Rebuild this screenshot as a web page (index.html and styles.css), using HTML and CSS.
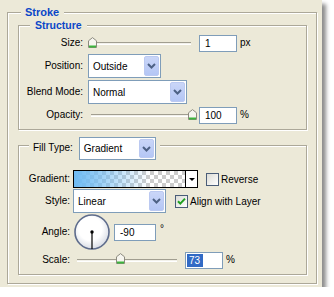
FILE: index.html
```html
<!DOCTYPE html>
<html>
<head>
<meta charset="utf-8">
<link rel="stylesheet" href="styles.css">
</head>
<body>
<div class="panel">
  <fieldset class="group outer">
    <legend class="title">Stroke</legend>
    <fieldset class="group structure">
      <legend class="title sub">Structure</legend>
      <div class="row r-size">
        <span class="label">Size:</span>
        <div class="slider s-size">
          <div class="track"></div>
          <span class="thumb" style="left:0px"><svg width="9" height="11" viewBox="0 0 9 11"><path d="M0.5 10.5 V3.8 L4.5 0.6 L8.5 3.8 V10.5 Z" fill="#F6F5EF" stroke="#8C8A7E"/><path d="M1 9.5 H8" stroke="#3CB43C" stroke-width="2"/></svg></span>
        </div>
        <div class="input w38"><span>1</span></div>
        <span class="unit">px</span>
      </div>
      <div class="row r-pos">
        <span class="label">Position:</span>
        <div class="select w73"><span class="val">Outside</span><span class="btn"><svg width="9" height="6" viewBox="0 0 9 6"><path d="M1 1 L4.5 4.5 L8 1" fill="none" stroke="#4D6185" stroke-width="2"/></svg></span></div>
      </div>
      <div class="row r-blend">
        <span class="label">Blend Mode:</span>
        <div class="select w99"><span class="val">Normal</span><span class="btn"><svg width="9" height="6" viewBox="0 0 9 6"><path d="M1 1 L4.5 4.5 L8 1" fill="none" stroke="#4D6185" stroke-width="2"/></svg></span></div>
      </div>
      <div class="row r-op">
        <span class="label">Opacity:</span>
        <div class="slider s-op">
          <div class="track"></div>
          <span class="thumb" style="left:100px"><svg width="9" height="11" viewBox="0 0 9 11"><path d="M0.5 10.5 V3.8 L4.5 0.6 L8.5 3.8 V10.5 Z" fill="#F6F5EF" stroke="#8C8A7E"/><path d="M1 9.5 H8" stroke="#3CB43C" stroke-width="2"/></svg></span>
        </div>
        <div class="input w38"><span>100</span></div>
        <span class="unit">%</span>
      </div>
    </fieldset>
    <fieldset class="group fill">
      <legend class="ftitle"><span class="ftext">Fill Type:</span><span class="select w77"><span class="val">Gradient</span><span class="btn"><svg width="9" height="6" viewBox="0 0 9 6"><path d="M1 1 L4.5 4.5 L8 1" fill="none" stroke="#4D6185" stroke-width="2"/></svg></span></span></legend>
      <div class="row r-grad">
        <span class="label">Gradient:</span>
        <div class="swatch"><span class="gfill"></span><span class="garrow"><i class="tri"></i></span></div>
        <span class="check"><span class="box"></span>Reverse</span>
      </div>
      <div class="row r-style">
        <span class="label">Style:</span>
        <div class="select w93"><span class="val">Linear</span><span class="btn"><svg width="9" height="6" viewBox="0 0 9 6"><path d="M1 1 L4.5 4.5 L8 1" fill="none" stroke="#4D6185" stroke-width="2"/></svg></span></div>
        <span class="check c-align"><span class="box"><svg width="11" height="11" viewBox="0 0 11 11"><path d="M2 5.2 L4.3 7.6 L9 2.6" fill="none" stroke="#21A121" stroke-width="2"/></svg></span>Align with Layer</span>
      </div>
      <div class="row r-angle">
        <span class="label">Angle:</span>
        <span class="dial"><svg width="37" height="37" viewBox="0 0 37 37"><defs><radialGradient id="dg" cx="0.45" cy="0.4" r="0.62"><stop offset="0.55" stop-color="#FFFFFF"/><stop offset="1" stop-color="#D6DAE3"/></radialGradient></defs><circle cx="18" cy="18" r="17" fill="url(#dg)" stroke="#5E6C8C" stroke-width="1.6"/><line x1="18" y1="18" x2="18" y2="35" stroke="#000" stroke-width="1.2"/><circle cx="18" cy="18" r="1.7" fill="#000"/></svg></span>
        <div class="input w42"><span>-90</span></div>
        <span class="deg">°</span>
      </div>
      <div class="row r-scale">
        <span class="label">Scale:</span>
        <div class="slider s-scale">
          <div class="track"></div>
          <span class="thumb" style="left:43px"><svg width="9" height="11" viewBox="0 0 9 11"><path d="M0.5 10.5 V3.8 L4.5 0.6 L8.5 3.8 V10.5 Z" fill="#F6F5EF" stroke="#8C8A7E"/><path d="M1 9.5 H8" stroke="#3CB43C" stroke-width="2"/></svg></span>
        </div>
        <div class="input w38 sel"><span class="hl">73</span></div>
        <span class="unit">%</span>
      </div>
    </fieldset>
  </fieldset>
</div>
</body>
</html>
```
FILE: styles.css
```css
* { box-sizing: border-box; }
body {
  margin: 0;
  background: #fff;
  font-family: "Liberation Sans", Arial, sans-serif;
  font-size: 10px;
  line-height: 13px;
  color: #000;
}
.panel {
  width: 322px;
  height: 287px;
  background: #ECE9D8;
  padding: 6px 5px 3px 7px;
  box-shadow: 4px 4px 4px rgba(0, 0, 0, 0.45);
}
fieldset.group {
  margin: 0;
  min-width: 0;
  border: 1px solid #ACA899;
  box-shadow: inset 1px 1px 0 #fff, 1px 1px 0 #fff;
}
.outer { padding: 0 9px 8px 10px; }
.structure { padding: 0 0 5px 0; }
fieldset.fill { padding: 0 0 5px 0; margin-top: 7px; }
legend {
  background: #ECE9D8;
}
.title {
  margin-left: 3px;
  padding: 0 5px 0 4px;
  font-weight: bold;
  font-size: 11px;
  line-height: 13px;
  color: #0A46C8;
}
.title.sub {
  margin-left: 11px;
  padding: 0 5px;
  font-size: 10.5px;
}
.ftitle {
  margin-left: 10px;
  padding: 0 4px;
  height: 17px;
  display: flex;
  align-items: flex-start;
}
.ftext { margin-right: 6px; margin-top: 4px; }

.row { display: flex; align-items: center; }
.label { text-align: right; padding-bottom: 2px; flex: none; }
.structure .label { width: 64px; margin-right: 5px; }
.fill .label { width: 51px; margin-right: 3px; }

.r-size { margin-top: 3px; }
.r-pos { margin-top: 2px; }
.r-blend { margin-top: 2px; }
.r-op { margin-top: 3px; }
.r-grad { margin-top: 16px; }
.r-style { margin-top: 1px; }
.r-angle { margin-top: 1px; }
.r-scale { margin-top: 1px; }

/* slider */
.slider {
  position: relative;
  height: 17px;
  display: flex;
  align-items: center;
  flex: none;
}
.track {
  height: 3px;
  border-top: 1px solid #A19E90;
  border-bottom: 1px solid #fff;
  background: #F2F1EA;
}
.thumb {
  position: absolute;
  top: 2px;
  width: 9px;
  height: 11px;
  display: block;
}
.thumb svg { display: block; }
.s-size { width: 109px; margin-right: 2px; }
.s-size .track { width: 99px; margin-left: 4px; }
.s-op { width: 109px; margin-right: 2px; }
.s-op .track { width: 100px; margin-left: 3px; }
.s-scale { width: 108px; margin-right: 4px; }
.s-scale .track { width: 100px; margin-left: 4px; }
.s-scale .thumb { top: 1px; }

/* inputs */
.input {
  height: 17px;
  border: 1px solid #7F9DB9;
  background: #fff;
  padding: 1px 0 0 5px;
  line-height: 13px;
  flex: none;
}
.w38 { width: 38px; }
.w42 { width: 42px; }
.input.sel { padding: 1px 0 0 1px; }
.hl {
  display: inline-block;
  height: 13px;
  background: #316AC5;
  color: #fff;
  padding: 0 3px 0 2px;
}
.unit { margin-left: 3px; padding-bottom: 3px; }
.deg { margin-left: 4px; padding-bottom: 8px; font-size: 10px; }

/* select */
.select {
  display: flex;
  height: 24px;
  border: 1px solid #7F9DB9;
  background: #fff;
  padding: 1px;
  flex: none;
}
.ftitle .select { height: 23px; }
.w73 { width: 73px; }
.w99 { width: 99px; }
.w77 { width: 77px; }
.w93 { width: 93px; }
.select .val {
  flex: 1;
  padding-left: 3px;
  display: flex;
  align-items: center;
  font-size: 10px;
  font-weight: normal;
  color: #000;
}
.select .btn {
  width: 15px;
  border: 1px solid #BBC9F1;
  border-radius: 2px;
  background: linear-gradient(#CAD6F8, #B4C6F5);
  display: flex;
  align-items: center;
  justify-content: center;
}
.select .btn svg { display: block; }

/* gradient swatch */
.swatch {
  width: 125px;
  height: 18px;
  border: 1px solid #000;
  display: flex;
  flex: none;
}
.gfill {
  flex: 1;
  background:
    linear-gradient(90deg, #6FBBF3 0%, rgba(111, 187, 243, 0.75) 20%, rgba(111, 187, 243, 0) 68%),
    repeating-conic-gradient(#CCCCCC 0 25%, #FFFFFF 0 50%) 0 0 / 8px 8px;
}
.garrow {
  width: 12px;
  border-left: 1px solid #000;
  background: #fff;
  display: flex;
  align-items: center;
  justify-content: center;
}
.tri {
  width: 0;
  height: 0;
  border-left: 3px solid transparent;
  border-right: 3px solid transparent;
  border-top: 3px solid #000;
}

/* checkbox */
.check {
  display: flex;
  align-items: center;
  margin-left: 8px;
}
.c-align { margin-left: 9px; }
.box {
  width: 13px;
  height: 13px;
  border: 1px solid #4A5D78;
  background: linear-gradient(135deg, #DCDCD6, #FFFFFF);
  margin-right: 2px;
  display: flex;
  align-items: center;
  justify-content: center;
}
.box svg { display: block; }

/* dial */
.dial {
  width: 37px;
  height: 37px;
  margin-left: 1px;
  margin-right: 3px;
  flex: none;
}
.dial svg { display: block; }
```
